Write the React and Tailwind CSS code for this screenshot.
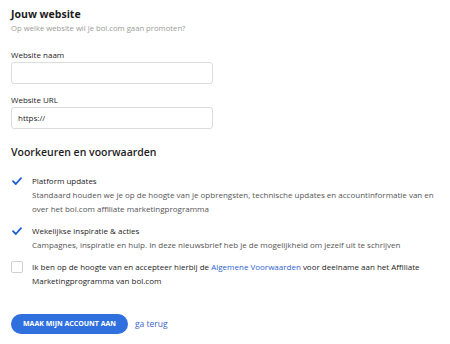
export default function App() {
  return (
    <div className="w-[450px] h-[344px] bg-white overflow-hidden font-['Open_Sans',sans-serif] text-[#1d1d1d]">
      <div className="pl-[11px] pt-[6px]">
        <h1 className="text-[10.5px] font-bold leading-[16px]">Jouw website</h1>
        <p className="text-[7.7px] leading-[12px] text-[#9a9a9a]">Op welke website wil je bol.com gaan promoten?</p>

        <label className="block mt-[15px] text-[8px] leading-[12px]">Website naam</label>
        <div className="mt-[1px] w-[202px] h-[22px] rounded-[3px] border border-[#dcdcdc]" />

        <label className="block mt-[10px] text-[8px] leading-[12px]">Website URL</label>
        <div className="mt-[1px] w-[202px] h-[22px] rounded-[3px] border border-[#dcdcdc] flex items-center pl-[6px] text-[8px]">
          https://
        </div>

        <h2 className="mt-[15px] text-[10.5px] font-semibold leading-[16px]">Voorkeuren en voorwaarden</h2>

        <div className="mt-[14px] flex flex-col gap-[8px] text-[8px] leading-[14px]">
          <div className="flex">
            <div className="w-[21px] shrink-0 pt-[3px] pl-[1px]">
              <svg width="10" height="8" viewBox="0 0 10 8">
                <path d="M1 4.2 L3.8 7 L9 1.2" fill="none" stroke="#1f5fd6" strokeWidth="1.8" strokeLinecap="round" strokeLinejoin="round" />
              </svg>
            </div>
            <div>
              <div>Platform updates</div>
              <div className="text-[#555]">
                Standaard houden we je op de hoogte van je opbrengsten, technische updates en accountinformatie van en over het bol.com affiliate marketingprogramma
              </div>
            </div>
          </div>

          <div className="flex">
            <div className="w-[21px] shrink-0 pt-[3px] pl-[1px]">
              <svg width="10" height="8" viewBox="0 0 10 8">
                <path d="M1 4.2 L3.8 7 L9 1.2" fill="none" stroke="#1f5fd6" strokeWidth="1.8" strokeLinecap="round" strokeLinejoin="round" />
              </svg>
            </div>
            <div>
              <div>Wekelijkse inspiratie &amp; acties</div>
              <div className="text-[#555]">
                Campagnes, inspiratie en hulp. In deze nieuwsbrief heb je de mogelijkheid om jezelf uit te schrijven
              </div>
            </div>
          </div>

          <div className="flex">
            <div className="w-[21px] shrink-0 pt-[1px]">
              <div className="w-[12px] h-[12px] rounded-[2px] border border-[#cfcfcf]" />
            </div>
            <p className="pr-[10px]">
              Ik ben op de hoogte van en accepteer hierbij de <span className="text-[#2f5fd0]">Algemene Voorwaarden</span> voor deelname aan het Affiliate Marketingprogramma van bol.com
            </p>
          </div>
        </div>

        <div className="mt-[26px] flex items-center gap-[7px]">
          <button className="w-[117px] h-[20px] rounded-full bg-[#3070de] text-white text-[7px] font-bold">
            MAAK MIJN ACCOUNT AAN
          </button>
          <span className="text-[8.5px] text-[#3d63c9]">ga terug</span>
        </div>
      </div>
    </div>
  );
}
